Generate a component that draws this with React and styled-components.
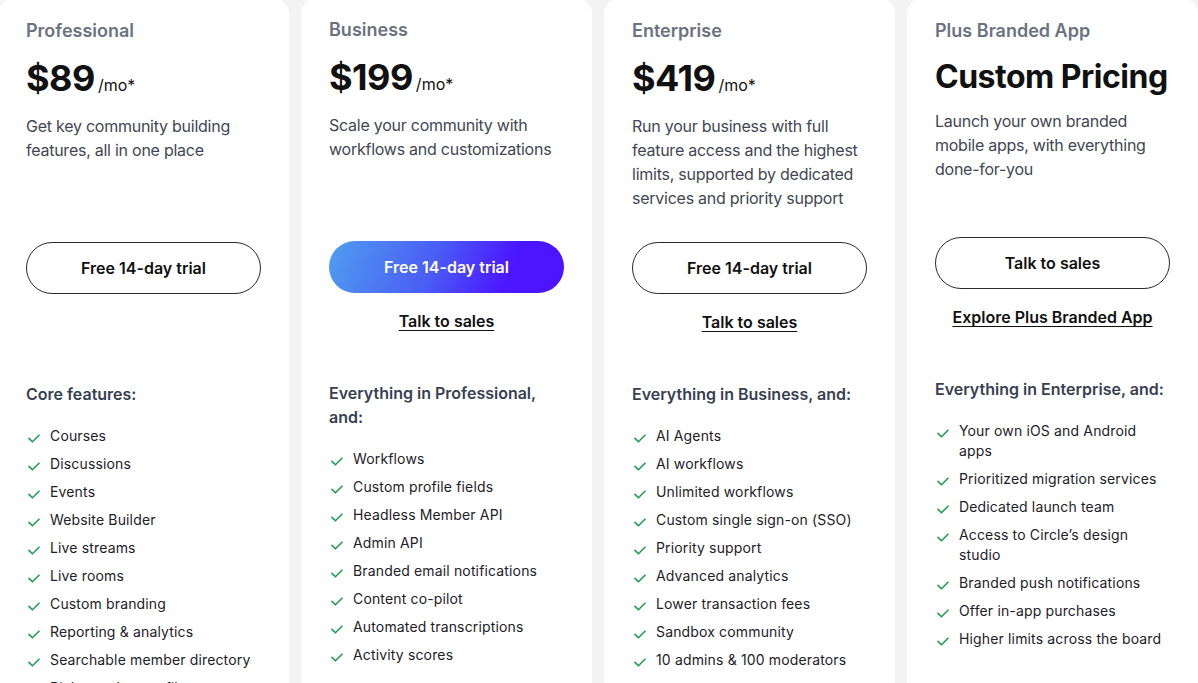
import styled, { createGlobalStyle } from "styled-components";

const plans = [
  {
    name: "Professional",
    price: "$89",
    desc: "Get key community building features, all in one place",
    cta: "Free 14-day trial",
    heading: "Core features:",
    features: [
      "Courses",
      "Discussions",
      "Events",
      "Website Builder",
      "Live streams",
      "Live rooms",
      "Custom branding",
      "Reporting & analytics",
      "Searchable member directory",
      "Rich member profiles",
    ],
  },
  {
    name: "Business",
    price: "$199",
    featured: true,
    desc: "Scale your community with workflows and customizations",
    cta: "Free 14-day trial",
    link: "Talk to sales",
    heading: "Everything in Professional, and:",
    features: [
      "Workflows",
      "Custom profile fields",
      "Headless Member API",
      "Admin API",
      "Branded email notifications",
      "Content co-pilot",
      "Automated transcriptions",
      "Activity scores",
    ],
  },
  {
    name: "Enterprise",
    price: "$419",
    desc: "Run your business with full feature access and the highest limits, supported by dedicated services and priority support",
    cta: "Free 14-day trial",
    link: "Talk to sales",
    heading: "Everything in Business, and:",
    features: [
      "AI Agents",
      "AI workflows",
      "Unlimited workflows",
      "Custom single sign-on (SSO)",
      "Priority support",
      "Advanced analytics",
      "Lower transaction fees",
      "Sandbox community",
      "10 admins & 100 moderators",
    ],
  },
  {
    name: "Plus Branded App",
    custom: "Custom Pricing",
    desc: "Launch your own branded mobile apps, with everything done-for-you",
    cta: "Talk to sales",
    link: "Explore Plus Branded App",
    heading: "Everything in Enterprise, and:",
    features: [
      "Your own iOS and Android apps",
      "Prioritized migration services",
      "Dedicated launch team",
      "Access to Circle’s design studio",
      "Branded push notifications",
      "Offer in-app purchases",
      "Higher limits across the board",
    ],
  },
];

const CheckIcon = () => (
  <Check width="12" height="9" viewBox="0 0 12 9" fill="none">
    <path
      d="M1 4.4 L4.4 7.8 L11 1.2"
      stroke="currentColor"
      strokeWidth="1.6"
      strokeLinecap="round"
      strokeLinejoin="round"
    />
  </Check>
);

const App = () => {
  return (
    <>
      <GlobalStyle />
      <Page>
        {plans.map((p) => (
          <Card key={p.name} $featured={p.featured}>
            <PlanName>{p.name}</PlanName>
            {p.custom ? (
              <CustomPrice>{p.custom}</CustomPrice>
            ) : (
              <PriceRow>
                <Price>{p.price}</Price>
                <Per>/mo*</Per>
              </PriceRow>
            )}
            <Desc>{p.desc}</Desc>
            <CtaButton $featured={p.featured}>{p.cta}</CtaButton>
            <LinkSlot>{p.link && <SalesLink href="#">{p.link}</SalesLink>}</LinkSlot>
            <FeatureHeading>{p.heading}</FeatureHeading>
            <FeatureList>
              {p.features.map((f) => (
                <Feature key={f}>
                  <CheckIcon />
                  <span>{f}</span>
                </Feature>
              ))}
            </FeatureList>
          </Card>
        ))}
      </Page>
    </>
  );
};
export default App;

const GlobalStyle = createGlobalStyle`
  html, body {
    margin: 0;
    padding: 0;
    background: #f3f3f3;
    overflow: hidden;
  }
  body {
    font-family: Inter, "Noto Sans", "Liberation Sans", sans-serif;
    -webkit-font-smoothing: antialiased;
  }
`;

const Page = styled.div`
  display: grid;
  grid-template-columns: repeat(4, 291px);
  gap: 12px;
  margin: -2px 0 0 -2px;
  height: 700px;
`;

const Card = styled.div`
  background: #ffffff;
  border-radius: 16px;
  padding: ${(p) => (p.$featured ? "18px" : "19px")} 28px 0;
  display: flex;
  flex-direction: column;
`;

const PlanName = styled.div`
  font-size: 18px;
  line-height: 28px;
  font-weight: 600;
  color: #6b7280;
`;

const PriceRow = styled.div`
  display: flex;
  align-items: baseline;
  gap: 3px;
  margin-top: 11px;
  height: 44px;
`;

const Price = styled.span`
  font-size: 36px;
  line-height: 44px;
  font-weight: 700;
  color: #111111;
  letter-spacing: -0.5px;
`;

const Per = styled.span`
  font-size: 16px;
  color: #111111;
`;

const CustomPrice = styled.div`
  margin-top: 13px;
  font-size: 32px;
  line-height: 37px;
  font-weight: 700;
  color: #111111;
  letter-spacing: -0.5px;
  white-space: nowrap;
`;

const Desc = styled.p`
  margin: 14px 0 32px;
  min-height: 96px;
  font-size: 16px;
  line-height: 24px;
  letter-spacing: -0.25px;
  color: #414753;
`;

const CtaButton = styled.button`
  height: 52px;
  width: 100%;
  border-radius: 999px;
  font-family: inherit;
  font-size: 16px;
  font-weight: 600;
  cursor: pointer;
  border: ${(p) => (p.$featured ? "none" : "1px solid #2a2a2a")};
  color: ${(p) => (p.$featured ? "#ffffff" : "#111111")};
  background: ${(p) =>
    p.$featured
      ? "linear-gradient(110deg, #4f9eef 0%, #4a5bf5 45%, #4b17ff 75%, #4c12ff 100%)"
      : "#ffffff"};
`;

const LinkSlot = styled.div`
  height: 24px;
  margin: 16px 0 48px;
  text-align: center;
`;

const SalesLink = styled.a`
  font-size: 16px;
  line-height: 24px;
  font-weight: 600;
  color: #111111;
  text-decoration: underline;
  text-underline-offset: 3px;
`;

const FeatureHeading = styled.div`
  font-size: 16px;
  line-height: 24px;
  font-weight: 600;
  color: #374151;
`;

const FeatureList = styled.ul`
  list-style: none;
  margin: 20px 0 0;
  padding: 0;
  display: flex;
  flex-direction: column;
  gap: 8px;
`;

const Feature = styled.li`
  display: flex;
  align-items: flex-start;
  gap: 10px;
  font-size: 14px;
  line-height: 20px;
  letter-spacing: 0.15px;
  color: #1d2129;
`;

const Check = styled.svg`
  flex: none;
  margin: 8px 0 0 2px;
  color: #1f9d4c;
`;
